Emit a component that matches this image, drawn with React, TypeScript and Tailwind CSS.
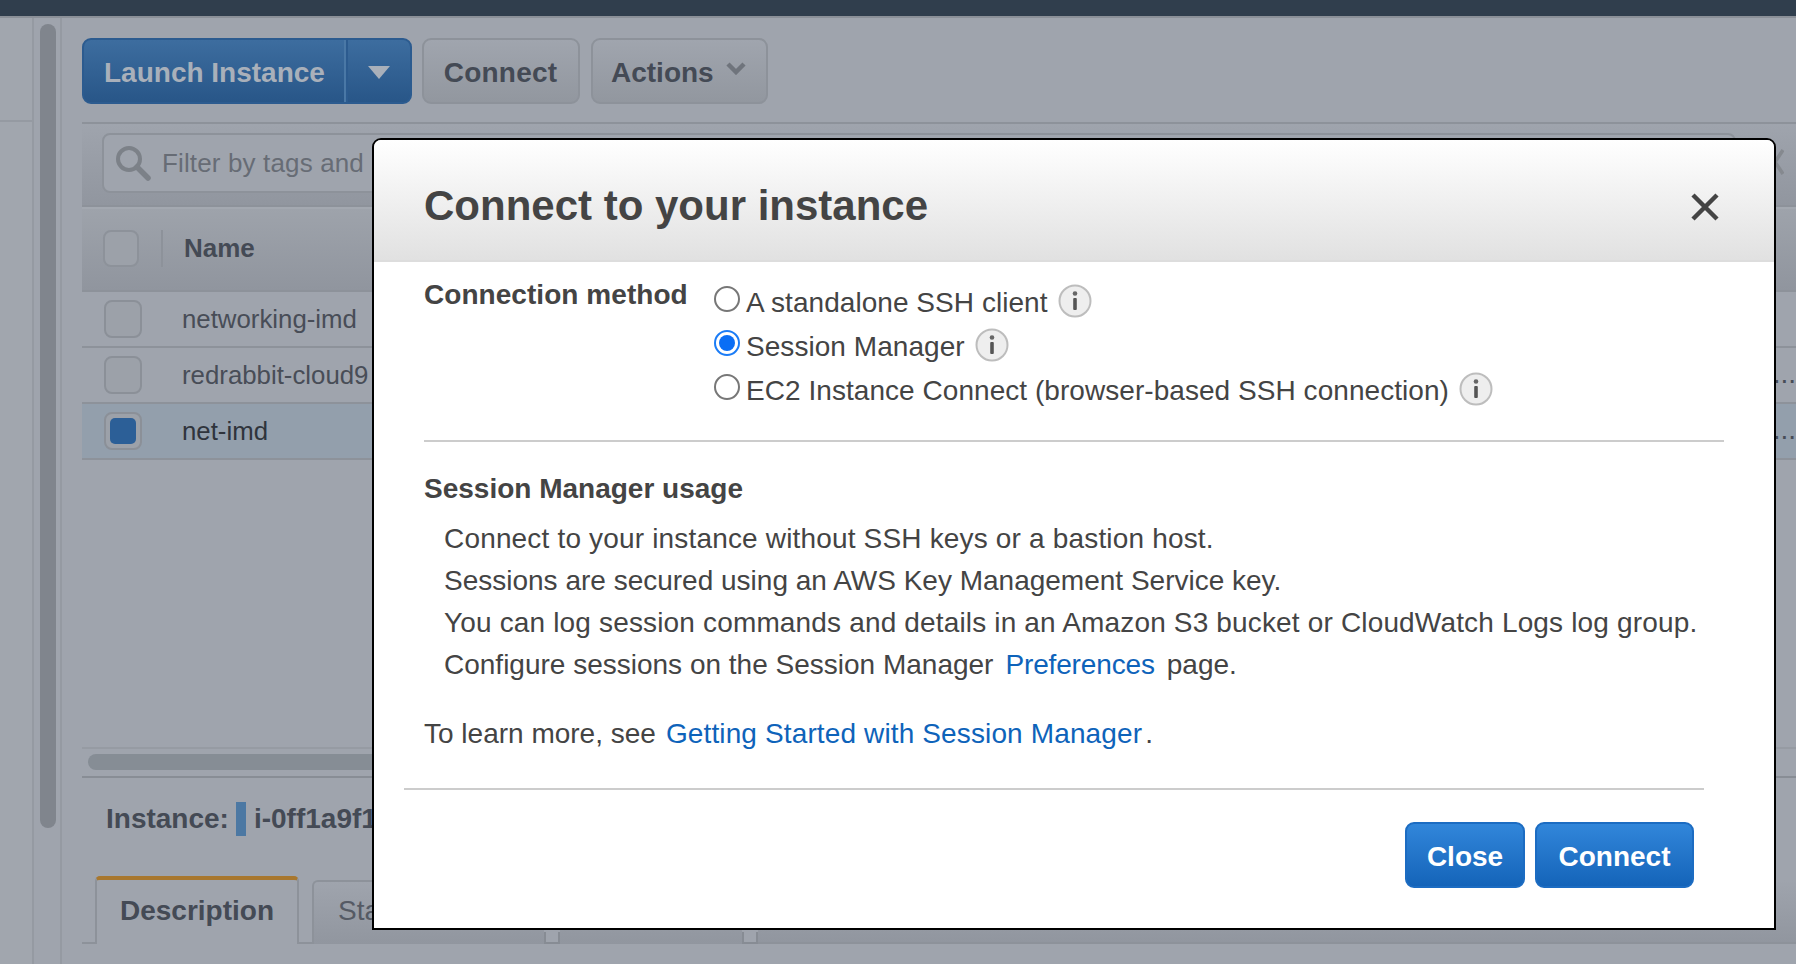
import React from "react";

function InfoIcon() {
  return (
    <svg viewBox="0 0 34 34" className="w-[34px] h-[34px] shrink-0">
      <circle cx="17" cy="17" r="15.5" fill="#eeeeee" stroke="#bdbdbd" strokeWidth="2" />
      <circle cx="17" cy="9.5" r="2.3" fill="#666666" />
      <rect x="15.2" y="14" width="3.6" height="12" rx="1" fill="#555555" />
    </svg>
  );
}

function Radio({ checked }: { checked?: boolean }) {
  return checked ? (
    <div className="w-[26px] h-[26px] rounded-full border-2 border-[#1b7cf6] bg-white flex items-center justify-center shrink-0">
      <div className="w-[16px] h-[16px] rounded-full bg-[#0a6ef5]" />
    </div>
  ) : (
    <div className="w-[26px] h-[26px] rounded-full border-2 border-[#777777] bg-white shrink-0" />
  );
}

function Option({ label, checked }: { label: string; checked?: boolean }) {
  return (
    <div className="h-[44px] flex items-start">
      <div className="mt-[9px]">
        <Radio checked={checked} />
      </div>
      <span className="ml-[6px] leading-[44px] mt-[4px] tracking-[0.05px] whitespace-nowrap">{label}</span>
      <div className="ml-[10px] mt-[7px]">
        <InfoIcon />
      </div>
    </div>
  );
}

function RowCheck({ selected }: { selected?: boolean }) {
  return (
    <div className="w-[38px] h-[38px] rounded-[8px] border-2 border-[#8b9098] bg-[#9ca1a9] flex items-center justify-center shrink-0">
      {selected && <div className="w-[26px] h-[26px] rounded-[5px] bg-[#2c5f97]" />}
    </div>
  );
}

function TableRow({ name, selected, dots }: { name: string; selected?: boolean; dots?: boolean }) {
  return (
    <div
      className={
        selected
          ? "h-[56px] flex items-center pl-[22px] border-b-2 border-[#8d929a] bg-[#939fac] text-[#2f343c]"
          : "h-[56px] flex items-center pl-[22px] border-b-2 border-[#8d929a] text-[#484d57]"
      }
    >
      <RowCheck selected={selected} />
      <span className="ml-[40px] text-[25.8px] flex-1 whitespace-nowrap">{name}</span>
      {dots && <span className="text-[28px] leading-none text-[#484d57] self-end mb-[14px] whitespace-nowrap">...</span>}
    </div>
  );
}

export default function App() {
  return (
    <div className="relative w-[1796px] h-[964px] overflow-hidden bg-[#9fa4ad] font-['Liberation_Sans',Arial,sans-serif]">
      <div className="h-[18px] bg-[#303e4d] border-b-2 border-[#8b9098]" />
      <div className="flex h-[946px]">
        <div className="w-[34px] border-r-2 border-[#959aa2] bg-[#a1a6ae]">
          <div className="h-[104px] border-b-2 border-[#959aa2]" />
        </div>
        <div className="w-[28px] border-r-2 border-[#959aa2] pl-[6px] pt-[6px]">
          <div className="w-[16px] h-[804px] rounded-full bg-[#80858d]" />
        </div>
        <div className="flex-1 min-w-0 pl-[20px]">
          {/* toolbar */}
          <div className="h-[104px] pt-[20px] flex items-start">
            <div className="h-[66px] w-[330px] rounded-[9px] border-2 border-[#2c5b8f] bg-gradient-to-b from-[#3d6d9f] to-[#285688] flex">
              <div className="w-[262px] h-full border-r-2 border-[#4a78a6] flex items-center pl-[20px] pt-[3px] text-[28px] font-bold text-[#a9b0ba]">
                Launch Instance
              </div>
              <div className="flex-1 border-l-2 border-[#2c5b8f] flex items-center justify-center pr-[1px] pt-[2px]">
                <svg viewBox="0 0 22 13" className="w-[22px] h-[13px]">
                  <path d="M0 0H22L11 13Z" fill="#a9b0ba" />
                </svg>
              </div>
            </div>
            <div className="ml-[10px] h-[66px] w-[158px] rounded-[9px] border-2 border-[#8d929a] bg-gradient-to-b from-[#a0a5ae] to-[#92979f] flex items-center justify-center pt-[3px] pr-[1px] tracking-[0.2px] text-[28px] font-bold text-[#444a55]">
              Connect
            </div>
            <div className="ml-[11px] h-[66px] w-[177px] rounded-[9px] border-2 border-[#8d929a] bg-gradient-to-b from-[#a0a5ae] to-[#92979f] flex items-center pl-[18px] pt-[3px] text-[28px] font-bold text-[#444a55]">
              Actions
              <svg viewBox="0 0 20 14" className="ml-[12px] mb-[9px] w-[20px] h-[14px]">
                <path d="M2 3L10 11L18 3" fill="none" stroke="#6f747c" strokeWidth="4.5" />
              </svg>
            </div>
          </div>
          {/* filter */}
          <div className="h-[85px] border-y-2 border-[#8d929a] bg-gradient-to-b from-[#9fa4ad] to-[#91969f] pl-[20px] pt-[9px] flex items-start">
            <div className="h-[60px] w-[1634px] rounded-[8px] border-2 border-[#8d929a] bg-[#9fa4ad] flex items-center pl-[11px] text-[26px] tracking-[0.14px] text-[#676c75]">
              <svg viewBox="0 0 36 36" className="w-[36px] h-[36px] shrink-0">
                <circle cx="14" cy="14" r="11" fill="none" stroke="#7c8188" strokeWidth="4" />
                <path d="M22 22L33 33" stroke="#7c8188" strokeWidth="5.5" strokeLinecap="round" />
              </svg>
              <span className="ml-[11px] whitespace-nowrap">Filter by tags and attributes or search by keyword</span>
            </div>
            <svg viewBox="0 0 18 26" className="ml-[30px] mt-[16px] w-[18px] h-[26px] shrink-0">
              <path d="M1 1L17 25M17 1L1 25" stroke="#85898f" strokeWidth="3.5" fill="none" />
            </svg>
          </div>
          {/* table header */}
          <div className="h-[85px] border-t-2 border-[#a3a8b0] border-b-2 border-b-[#8d929a] bg-gradient-to-b from-[#9ea3ab] to-[#90959e] pl-[21px] pt-[21px] flex items-start">
            <div className="w-[36px] h-[37px] rounded-[8px] border-2 border-[#8d929a] bg-[#9ca1a9]" />
            <div className="ml-[22px] w-[2px] h-[37px] bg-[#8d929a]" />
            <span className="ml-[21px] text-[26px] font-bold text-[#444a55] leading-[36px]">Name</span>
          </div>
          <TableRow name="networking-imd" />
          <TableRow name="redrabbit-cloud9" dots />
          <TableRow name="net-imd" selected dots />
          {/* horizontal scroller */}
          <div className="h-[287px]" />
          <div className="h-[31px] border-y-2 border-t-[#969ba3] border-b-[#888d95] pl-[6px] pt-[5px]">
            <div className="h-[16px] w-[1500px] rounded-full bg-[#868d95]" />
          </div>
          {/* instance line */}
          <div className="h-[98px] pl-[24px] flex items-start pt-[24px] text-[28px] font-bold text-[#444a55] whitespace-nowrap">
            <span className="leading-[34px]">Instance:</span>
            <div className="ml-[7px] w-[10px] h-[34px] bg-[#4c78a3]" />
            <span className="ml-[8px] leading-[34px]">i-0ff1a9f1e3c7a</span>
          </div>
          {/* tabs */}
          <div className="h-[68px] flex items-start">
            <div className="w-[13px] h-[68px] border-b-2 border-[#8d929a]" />
            <div className="w-[204px] h-[68px] rounded-t-[5px] border-x-2 border-[#8d929a] border-t-4 border-t-[#a8772e] flex items-center justify-center pb-[2px] text-[28px] font-bold text-[#444a55]">
              Description
            </div>
            <div className="w-[13px] h-[68px] border-b-2 border-[#8d929a]" />
            <div className="mt-[4px] w-[232px] h-[64px] rounded-tl-[6px] border-l-2 border-t-2 border-[#8d929a] bg-gradient-to-b from-[#9fa4ad] to-[#91969f] pl-[24px] pt-[8px] text-[28px] text-[#555a64] whitespace-nowrap">
              Status Checks
            </div>
            <div className="mt-[56px] w-[16px] h-[12px] border-x-2 border-b-2 border-[#878c94] bg-[#9fa4ad]" />
            <div className="mt-[4px] w-[182px] h-[64px] bg-gradient-to-b from-[#9fa4ad] to-[#91969f]" />
            <div className="mt-[56px] w-[16px] h-[12px] border-x-2 border-b-2 border-[#878c94] bg-[#9fa4ad]" />
            <div className="mt-[4px] flex-1 h-[64px] bg-gradient-to-b from-[#9fa4ad] to-[#91969f] border-b-2 border-[#8d929a]" />
          </div>
        </div>
      </div>

      {/* modal */}
      <div className="absolute left-[372px] top-[138px] w-[1404px] h-[792px] bg-white border-2 border-black rounded-t-[9px] text-[28px] text-[#444444]">
        <div className="h-[122px] rounded-t-[7px] border-b-2 border-[#dddddd] bg-gradient-to-b from-white to-[#e1e1e1] pl-[50px] pr-[54px] pt-[12px] flex items-center justify-between">
          <h1 className="text-[42px] font-bold leading-none text-[#444444]">Connect to your instance</h1>
          <svg viewBox="0 0 30 28" className="mt-[2px] w-[30px] h-[28px] shrink-0">
            <path d="M3 2L27 26M27 2L3 26" stroke="#444444" strokeWidth="4.5" fill="none" />
          </svg>
        </div>
        <div className="h-[181px] pl-[50px] pr-[50px]">
          <div className="h-[180px] border-b-2 border-[#cccccc] flex items-start pt-[13px]">
            <div className="w-[290px] font-bold leading-[40px] tracking-[0.05px] whitespace-nowrap">Connection method</div>
            <div className="flex flex-col pt-[2px]">
              <Option label="A standalone SSH client" />
              <Option label="Session Manager" checked />
              <Option label="EC2 Instance Connect (browser-based SSH connection)" />
            </div>
          </div>
        </div>
        <div className="pl-[50px] pt-[25px] h-[345px]">
          <div className="font-bold leading-[42px]">Session Manager usage</div>
          <div className="pl-[20px] pt-[8px] leading-[42px] whitespace-nowrap">
            <div className="tracking-[0.17px]">Connect to your instance without SSH keys or a bastion host.</div>
            <div>Sessions are secured using an AWS Key Management Service key.</div>
            <div className="tracking-[0.16px]">You can log session commands and details in an Amazon S3 bucket or CloudWatch Logs log group.</div>
            <div>
              Configure sessions on the Session Manager
              <span className="ml-[12px] tracking-[-0.15px] text-[#0e63ba]">Preferences</span>
              <span className="ml-[12px]">page.</span>
            </div>
          </div>
          <div className="pt-[27px] leading-[42px] whitespace-nowrap">
            To learn more, see<span className="ml-[10px] tracking-[0.13px] text-[#0e63ba]">Getting Started with Session Manager</span>
            <span className="ml-[3px]">.</span>
          </div>
        </div>
        <div className="ml-[30px] mr-[70px] h-[2px] bg-[#cccccc]" />
        <div className="pt-[32px] pr-[80px] flex justify-end gap-[10px] text-white font-bold">
          <div className="w-[120px] h-[66px] rounded-[9px] border-2 border-[#1c6cc2] bg-gradient-to-b from-[#3186da] to-[#1464b9] flex items-center justify-center pt-[4px]">
            Close
          </div>
          <div className="w-[159px] h-[66px] rounded-[9px] border-2 border-[#1c6cc2] bg-gradient-to-b from-[#3186da] to-[#1464b9] flex items-center justify-center pt-[4px]">
            Connect
          </div>
        </div>
      </div>
    </div>
  );
}
